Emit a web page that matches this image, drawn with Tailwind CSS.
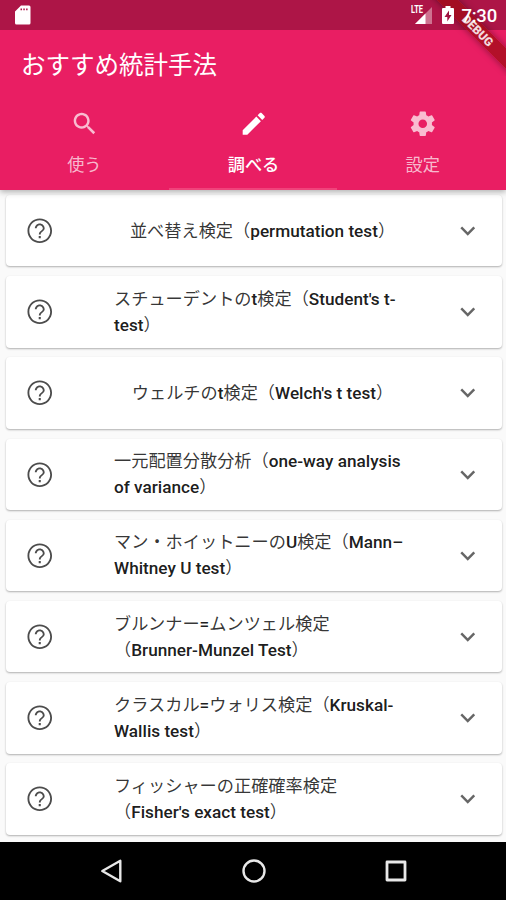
<!DOCTYPE html>
<html lang="ja">
<head>
<meta charset="utf-8">
<title>おすすめ統計手法</title>
<script src="https://cdn.jsdelivr.net/npm/@tailwindcss/browser@4"></script>
</head>
<body class="w-[506px] h-[900px] overflow-hidden bg-[#fafafa] font-[Roboto,'Noto_Sans_CJK_JP',sans-serif]">
<svg class="hidden">
  <symbol id="help" viewBox="0 0 24 24"><path d="M11.150 18h1.700v-1.700h-1.700zM12 2C6.480 2 2 6.480 2 12s4.480 10 10 10 10-4.480 10-10S17.520 2 12 2zm0 18.500c-4.690 0-8.500-3.810-8.500-8.500S7.310 3.500 12 3.500s8.500 3.810 8.500 8.500-3.810 8.500-8.500 8.500zM12 6c-2.210 0-4 1.790-4 4h1.500c0-1.380 1.120-2.500 2.500-2.500s2.500 1.120 2.500 2.500c0 2.150-3.250 1.900-3.250 5h1.500c0-2.250 3.250-2.500 3.250-5 0-2.210-1.790-4-4-4z"/></symbol>
  <symbol id="more" viewBox="0 0 24 24"><path d="M16.590 8.590L12 13.170 7.410 8.590 6 10l6 6 6-6z"/></symbol>
</svg>
<div class="flex h-full flex-col">
  <header class="relative z-10 flex h-[189.500px] shrink-0 flex-col bg-[#e91e63] shadow-[0_2px_6px_rgba(0,0,0,0.3)]">
    <div class="flex h-[30px] shrink-0 items-center justify-between bg-[#ad1547] pl-[14px] pr-[9px] text-white">
      <svg class="h-5 w-[18px]" viewBox="0 0 18 20"><path fill="#fff" fill-rule="evenodd" d="M7 0.500h8q1.500 0 1.500 1.500v16q0 1.500-1.500 1.500H2.500Q1 19.500 1 18V6.500zM6.500 3.500v1.800H8V3.500zm2.800 0v1.800h1.500V3.500zm2.800 0v1.800h1.500V3.500z"/></svg>
      <div class="relative z-20 flex items-center">
        <div class="relative h-5 w-[23px]">
          <svg class="h-5 w-[23px]" viewBox="0 0 23 20"><path fill="#fff" fill-opacity=".4" d="M22 2v17H5z"/><path fill="#fff" d="M15.500 8.500V19H5z"/></svg>
          <span class="absolute -top-px left-px origin-left scale-x-75 text-[10px] leading-[12px] font-bold">LTE</span>
        </div>
        <svg class="ml-[8px] h-5 w-[14px]" viewBox="0 0 14 20"><path fill="#fff" fill-rule="evenodd" d="M4.500 1h5v2H12q1 0 1 1v14q0 1-1 1H2q-1 0-1-1V4q0-1 1-1h2.500zM8 5.500L3.500 12h2.800v4.500L10.500 10H8z"/></svg>
        <span class="ml-[6px] mt-[2px] text-[18.500px] leading-5 font-medium tracking-[-0.2px]">7:30</span>
      </div>
    </div>
    <h1 class="flex h-[70px] shrink-0 items-center pt-[3px] pl-[21px] text-[24.500px] text-white">おすすめ統計手法</h1>
    <nav class="grid flex-1 grid-cols-3 text-[17.200px] text-white/70">
      <div class="flex flex-col items-center pt-[9px]">
        <svg class="size-[29.500px]" viewBox="0 0 24 24" fill="currentColor"><path d="M15.500 14h-.79l-.28-.27C15.410 12.590 16 11.110 16 9.500 16 5.910 13.090 3 9.500 3S3 5.910 3 9.500 5.910 16 9.500 16c1.610 0 3.090-.59 4.230-1.570l.27.28v.79l5 4.990L20.490 19l-4.990-5zm-6 0C7.010 14 5 11.990 5 9.500S7.010 5 9.500 5 14 7.010 14 9.500 11.990 14 9.500 14z"/></svg>
        <span class="mt-[13px] leading-[26px]">使う</span>
      </div>
      <div class="flex flex-col items-center border-b-[2.500px] border-[#f0437b] pt-[9px] pl-px text-white">
        <svg class="size-[29.500px]" viewBox="0 0 24 24" fill="currentColor"><path d="M3 17.250V21h3.750L17.810 9.940l-3.750-3.750L3 17.250zM20.710 7.040c.39-.39.39-1.020 0-1.410l-2.340-2.340c-.39-.39-1.020-.39-1.410 0l-1.830 1.830 3.750 3.750 1.830-1.830z"/></svg>
        <span class="mt-[13px] leading-[26px] font-medium">調べる</span>
      </div>
      <div class="flex flex-col items-center pt-[9px] pl-[2px]">
        <svg class="size-[29.500px]" viewBox="0 0 24 24" fill="currentColor"><path d="M19.430 12.980c.04-.32.07-.64.07-.98s-.03-.66-.07-.98l2.110-1.650c.19-.15.24-.42.12-.64l-2-3.460c-.12-.22-.39-.3-.61-.22l-2.490 1c-.52-.4-1.080-.73-1.690-.98l-.38-2.650C14.460 2.180 14.250 2 14 2h-4c-.25 0-.46.18-.49.42l-.38 2.650c-.61.25-1.170.59-1.690.98l-2.490-1c-.23-.09-.49 0-.61.22l-2 3.460c-.13.22-.07.49.12.64l2.110 1.650c-.04.32-.07.65-.07.98s.03.66.07.98l-2.110 1.650c-.19.15-.24.42-.12.64l2 3.460c.12.22.39.3.61.22l2.490-1c.52.4 1.080.73 1.690.98l.38 2.650c.03.24.24.42.49.42h4c.25 0 .46-.18.49-.42l.38-2.650c.61-.25 1.170-.59 1.690-.98l2.490 1c.23.09.49 0 .61-.22l2-3.460c.12-.22.07-.49-.12-.64l-2.110-1.650zM12 15.500c-1.930 0-3.500-1.570-3.500-3.500s1.570-3.500 3.500-3.500 3.500 1.570 3.500 3.500-1.570 3.500-3.500 3.500z"/></svg>
        <span class="mt-[13px] leading-[26px]">設定</span>
      </div>
    </nav>
    <!-- debug ribbon, under the status icons -->
    <div class="pointer-events-none absolute right-0 top-0 z-10 size-[76px] overflow-hidden">
      <div class="absolute left-[-12px] top-[23px] flex h-[15px] w-[120px] rotate-45 items-center justify-center bg-[#a00c16]/75 text-[12px] font-black text-white/85 shadow-[0_0_7px_rgba(0,0,0,0.4)]">DEBUG</div>
    </div>
  </header>

  <main class="flex min-h-0 flex-1 flex-col gap-[9.800px] overflow-hidden pl-[6px] pr-[4px] pt-[5.500px] text-[17.200px] leading-[26px] text-black/80">
    <section class="flex h-[71.400px] shrink-0 items-center rounded-[4px] bg-white pl-[19px] pr-[20px] shadow-[0_1px_2px_rgba(0,0,0,0.3)]"><svg class="size-[29.500px] fill-black/70"><use href="#help"/></svg><div class="ml-[59.500px] flex w-[297px] justify-center whitespace-nowrap"><p>並べ替え検定（<b class="font-medium text-black/90">permutation test</b>）</p></div><svg class="ml-auto size-[29.500px] fill-black/60"><use href="#more"/></svg></section>
    <section class="flex h-[71.400px] shrink-0 items-center rounded-[4px] bg-white pl-[19px] pr-[20px] shadow-[0_1px_2px_rgba(0,0,0,0.3)]"><svg class="size-[29.500px] fill-black/70"><use href="#help"/></svg><div class="ml-[59.500px] w-[297px] whitespace-nowrap"><p>スチューデントの<b class="font-medium text-black/90">t</b>検定（<b class="font-medium text-black/90">Student's t-<br>test</b>）</p></div><svg class="ml-auto size-[29.500px] fill-black/60"><use href="#more"/></svg></section>
    <section class="flex h-[71.400px] shrink-0 items-center rounded-[4px] bg-white pl-[19px] pr-[20px] shadow-[0_1px_2px_rgba(0,0,0,0.3)]"><svg class="size-[29.500px] fill-black/70"><use href="#help"/></svg><div class="ml-[59.500px] flex w-[297px] justify-center whitespace-nowrap"><p>ウェルチの<b class="font-medium text-black/90">t</b>検定（<b class="font-medium text-black/90">Welch's t test</b>）</p></div><svg class="ml-auto size-[29.500px] fill-black/60"><use href="#more"/></svg></section>
    <section class="flex h-[71.400px] shrink-0 items-center rounded-[4px] bg-white pl-[19px] pr-[20px] shadow-[0_1px_2px_rgba(0,0,0,0.3)]"><svg class="size-[29.500px] fill-black/70"><use href="#help"/></svg><div class="ml-[59.500px] w-[297px] whitespace-nowrap"><p>一元配置分散分析（<b class="font-medium text-black/90">one-way analysis<br>of variance</b>）</p></div><svg class="ml-auto size-[29.500px] fill-black/60"><use href="#more"/></svg></section>
    <section class="flex h-[71.400px] shrink-0 items-center rounded-[4px] bg-white pl-[19px] pr-[20px] shadow-[0_1px_2px_rgba(0,0,0,0.3)]"><svg class="size-[29.500px] fill-black/70"><use href="#help"/></svg><div class="ml-[59.500px] w-[297px] whitespace-nowrap"><p>マン・ホイットニーの<b class="font-medium text-black/90">U</b>検定（<b class="font-medium text-black/90">Mann–<br>Whitney U test</b>）</p></div><svg class="ml-auto size-[29.500px] fill-black/60"><use href="#more"/></svg></section>
    <section class="flex h-[71.400px] shrink-0 items-center rounded-[4px] bg-white pl-[19px] pr-[20px] shadow-[0_1px_2px_rgba(0,0,0,0.3)]"><svg class="size-[29.500px] fill-black/70"><use href="#help"/></svg><div class="ml-[59.500px] w-[297px] whitespace-nowrap"><p>ブルンナー<b class="font-medium text-black/90">=</b>ムンツェル検定<br>（<b class="font-medium text-black/90">Brunner-Munzel Test</b>）</p></div><svg class="ml-auto size-[29.500px] fill-black/60"><use href="#more"/></svg></section>
    <section class="flex h-[71.400px] shrink-0 items-center rounded-[4px] bg-white pl-[19px] pr-[20px] shadow-[0_1px_2px_rgba(0,0,0,0.3)]"><svg class="size-[29.500px] fill-black/70"><use href="#help"/></svg><div class="ml-[59.500px] w-[297px] whitespace-nowrap"><p>クラスカル<b class="font-medium text-black/90">=</b>ウォリス検定（<b class="font-medium text-black/90">Kruskal-<br>Wallis test</b>）</p></div><svg class="ml-auto size-[29.500px] fill-black/60"><use href="#more"/></svg></section>
    <section class="flex h-[71.400px] shrink-0 items-center rounded-[4px] bg-white pl-[19px] pr-[20px] shadow-[0_1px_2px_rgba(0,0,0,0.3)]"><svg class="size-[29.500px] fill-black/70"><use href="#help"/></svg><div class="ml-[59.500px] w-[297px] whitespace-nowrap"><p>フィッシャーの正確確率検定<br>（<b class="font-medium text-black/90">Fisher's exact test</b>）</p></div><svg class="ml-auto size-[29.500px] fill-black/60"><use href="#more"/></svg></section>
  </main>

  <footer class="flex h-[58.500px] shrink-0 items-center justify-between bg-black pl-[99px] pr-[98px]">
    <svg class="size-6" viewBox="0 0 24 24" fill="none" stroke="#e8e8e8" stroke-width="2.400" stroke-linejoin="round"><path d="M21.300 1.800v20.400L3.300 12z"/></svg>
    <svg class="size-6" viewBox="0 0 24 24" fill="none" stroke="#e8e8e8" stroke-width="2.400"><circle cx="12" cy="12" r="10.500"/></svg>
    <svg class="size-6" viewBox="0 0 24 24" fill="none" stroke="#e8e8e8" stroke-width="2.800" stroke-linejoin="round"><path d="M3 3h18v18H3z"/></svg>
  </footer>
</div>
</body>
</html>
